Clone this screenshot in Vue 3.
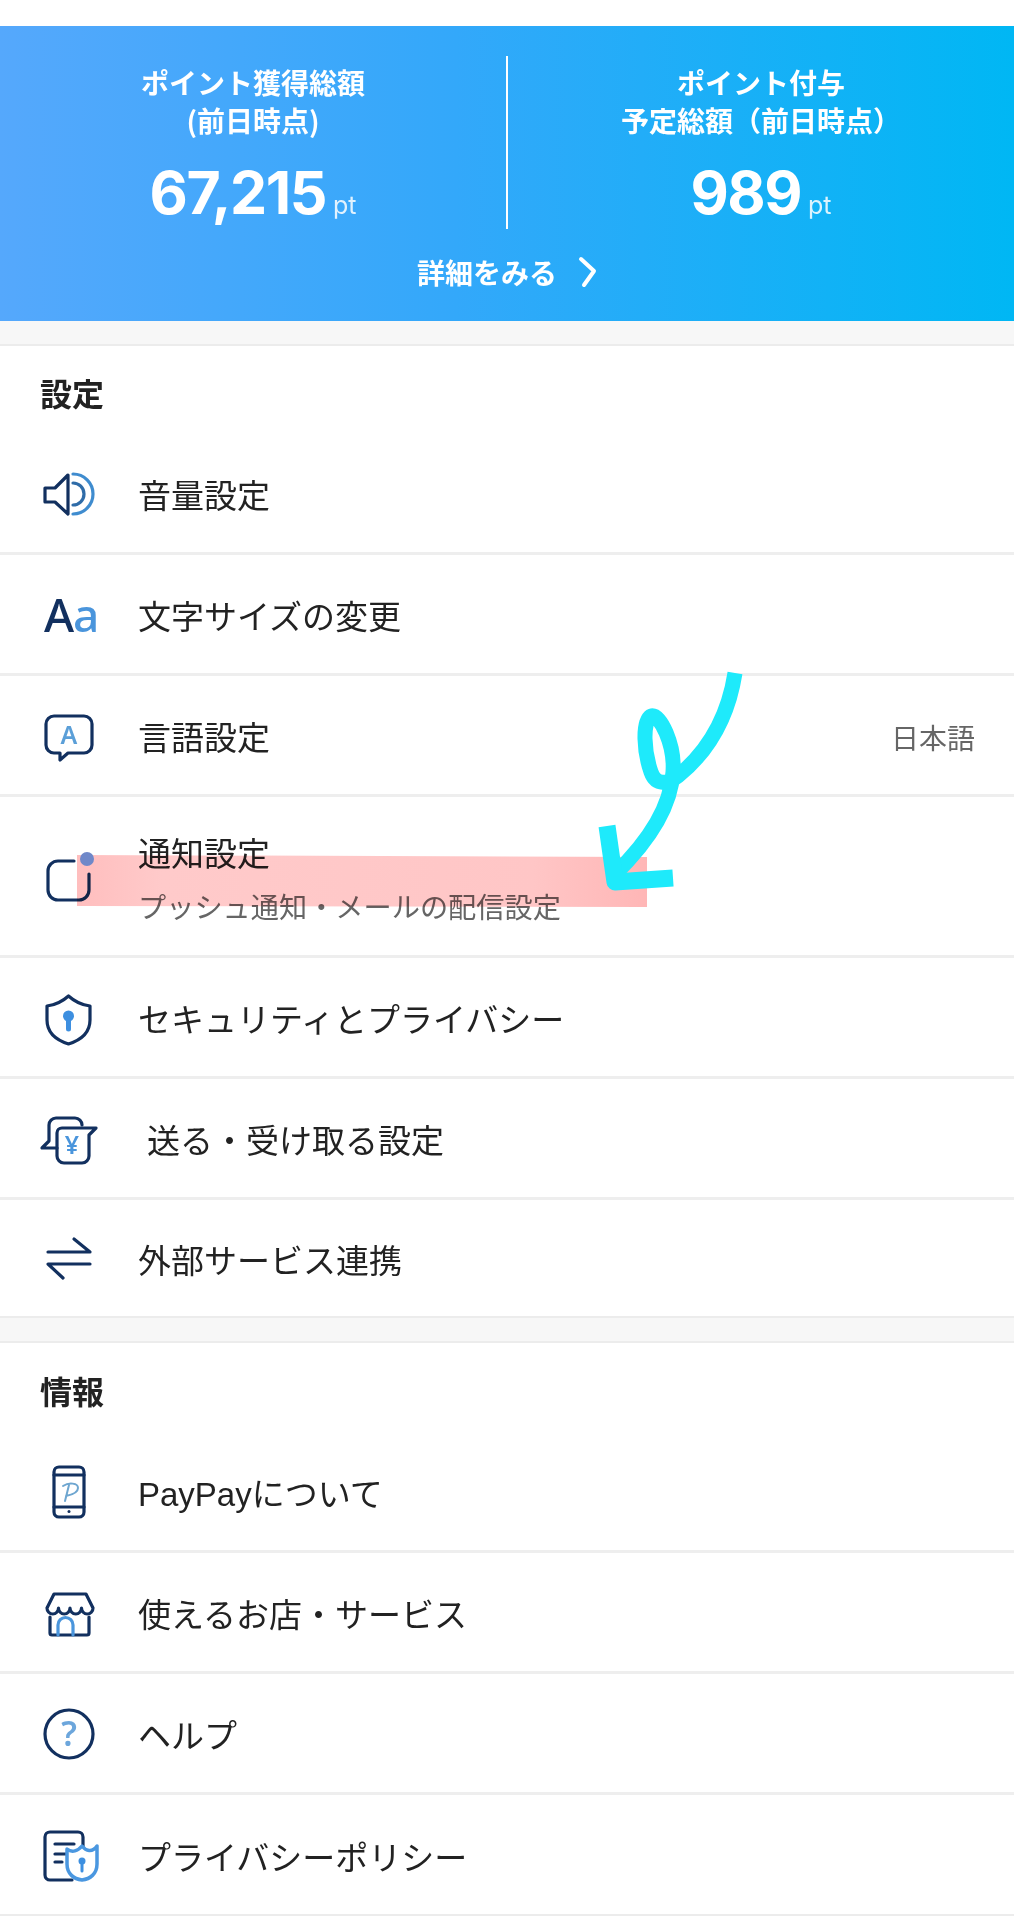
<template>
  <div class="page">
    <div class="hero">
      <div class="totals">
        <div v-for="total in totals" :key="total.value" class="total">
          <div class="total-title">
            <div v-for="line in total.lines" :key="line">{{ line }}</div>
          </div>
          <div class="total-value">{{ total.value }}<span class="unit">pt</span></div>
        </div>
      </div>
      <div class="detail-link">
        <span>詳細をみる</span>
        <svg width="20" height="32" viewBox="0 0 20 32" fill="none" stroke="#fff" stroke-width="4" stroke-linecap="round" stroke-linejoin="round">
          <path d="M4 3 L17 15 L7 29" />
        </svg>
      </div>
    </div>

    <div class="list">
      <section v-for="section in sections" :key="section.title" class="section">
        <h2>{{ section.title }}</h2>
        <div
          v-for="row in section.rows"
          :key="row.label"
          class="row"
          :class="{ tall: row.sub }"
        >
          <svg class="icon" width="64" height="64" viewBox="0 0 64 64" fill="none" stroke="#12305f" stroke-width="3.2" stroke-linecap="round" stroke-linejoin="round">
            <template v-if="row.icon === 'volume'">
              <path d="M9 26 V40 H19 L32 52 V13 L19 26 Z" />
              <path d="M37 21 A11 11 0 0 1 37 43" stroke="#2f6ca8" />
              <path d="M37 12 A20 20 0 0 1 37 52" stroke="#3f8ccf" />
            </template>
            <template v-else-if="row.icon === 'text'">
              <text x="8" y="49" class="glyph medium" font-size="46" fill="#12305f" stroke="none">A</text>
              <text x="37" y="49" class="glyph medium" font-size="46" fill="#4a95dc" stroke="none">a</text>
            </template>
            <template v-else-if="row.icon === 'language'">
              <path d="M18 12 H48 a8 8 0 0 1 8 8 V41 a8 8 0 0 1 -8 8 H32 L24 56 V49 H18 a8 8 0 0 1 -8 -8 V20 a8 8 0 0 1 8 -8 Z" />
              <text x="33" y="40" class="glyph" font-size="25" text-anchor="middle" fill="#5b9fd8" stroke="none">A</text>
            </template>
            <template v-else-if="row.icon === 'bell'">
              <path d="M38 16 H22 a10 10 0 0 0 -10 10 V45 a10 10 0 0 0 10 10 H43 a10 10 0 0 0 10 -10 V29" />
            </template>
            <template v-else-if="row.icon === 'shield'">
              <path d="M32.5 10 C38 15 46 19 54 20 V34 C54 46 45 54 32.5 58 C20 54 11 46 11 34 V20 C19 19 27 15 32.5 10 Z" />
              <circle cx="32.5" cy="30" r="5.5" fill="#3d8fe0" stroke="none" />
              <path d="M32.5 32 V43" stroke="#3d8fe0" stroke-width="5" />
            </template>
            <template v-else-if="row.icon === 'send'">
              <path d="M46 18 a7 7 0 0 0 -7 -7 H20 a7 7 0 0 0 -7 7 V34 L6 41 H21" />
              <path d="M60 21 H26 a5 5 0 0 0 -5 5 V49 a7 7 0 0 0 7 7 H46 a7 7 0 0 0 7 -7 V28 Z" />
              <text x="36" y="47" class="glyph" font-size="25" text-anchor="middle" fill="#4a95dc" stroke="none">¥</text>
            </template>
            <template v-else-if="row.icon === 'exchange'">
              <path d="M12 25 H54 L38 12" />
              <path d="M54 37 H12 L27 51" />
            </template>
            <template v-else-if="row.icon === 'phone'">
              <rect x="18" y="7" width="30" height="50" rx="5" />
              <path d="M18 15 H48 M18 47 H48" />
              <circle cx="33" cy="51.5" r="1.5" fill="#12305f" stroke="none" />
              <path d="M27 26 C33 22 42 23 42 28 C42 33 35 35 30 36 M33 25 L29 41" stroke="#6ea6d0" stroke-width="2" />
            </template>
            <template v-else-if="row.icon === 'shop'">
              <path d="M18 13 H50 L57 27 A5.75 6 0 0 1 45.5 27 A5.75 6 0 0 1 34 27 A5.75 6 0 0 1 22.5 27 A5.75 6 0 0 1 11 27 Z" />
              <path d="M14 36 V52 a2 2 0 0 0 2 2 H51 a2 2 0 0 0 2 -2 V36" />
              <path d="M22 54 V44 a7.5 7.5 0 0 1 15 0 V54" stroke="#4a95dc" />
            </template>
            <template v-else-if="row.icon === 'help'">
              <circle cx="33" cy="32" r="24" />
              <text x="33" y="44" class="glyph" font-size="34" text-anchor="middle" fill="#6ca6dc" stroke="none">?</text>
            </template>
            <template v-else-if="row.icon === 'policy'">
              <path d="M47 24 V13 a5 5 0 0 0 -5 -5 H14 a5 5 0 0 0 -5 5 V51 a5 5 0 0 0 5 5 H36" />
              <path d="M19 20 H38 M19 30 H30 M19 38 H26" />
              <path d="M31 25 C36 29 42 27 46 22 C50 27 56 29 61 22 V40 C61 50 54 55 46 56 C38 55 31 50 31 40 Z" stroke="#4a97e0" stroke-width="3.5" fill="#fff" />
              <circle cx="46" cy="37" r="3.5" fill="#3d8fe0" stroke="none" />
              <path d="M46 38 V47" stroke="#3d8fe0" stroke-width="3" />
            </template>
          </svg>
          <div class="label" :class="{ indent: row.indent }">
            <div>{{ row.label }}</div>
            <div v-if="row.sub" class="sub">{{ row.sub }}</div>
          </div>
          <div v-if="row.value" class="value">{{ row.value }}</div>
        </div>
      </section>
    </div>

    <!-- hand drawn marks lying over the screenshot -->
    <svg class="marks" width="1014" height="1920" viewBox="0 0 1014 1920" fill="none">
      <defs>
        <linearGradient id="pink" x1="0" x2="1" y1="0" y2="0">
          <stop offset="0" stop-color="#ffbebe" />
          <stop offset="0.15" stop-color="#ffcaca" />
          <stop offset="0.8" stop-color="#ffc6c6" />
          <stop offset="1" stop-color="#ffb6b6" />
        </linearGradient>
      </defs>
      <path class="marker" d="M77 855 L647 857 L647 907 L77 906 Z" fill="url(#pink)" />
      <circle cx="87" cy="859" r="7" fill="#6f88c9" />
      <g stroke="#1eeafb" stroke-linecap="butt" stroke-linejoin="round">
        <path stroke-width="15" d="M735 673 C730 705 716 745 678 776 C668 784 656 786 651 772 C644 752 642 722 651 716 C660 713 675 745 673 772 C671 805 650 840 615 874" />
        <path stroke-width="17" d="M607 826 L615 882 L673 878" />
      </g>
    </svg>
  </div>
</template>

<script setup>
const totals = [
  { lines: ['ポイント獲得総額', '(前日時点)'], value: '67,215' },
  { lines: ['ポイント付与', '予定総額（前日時点）'], value: '989' }
]

const sections = [
  {
    title: '設定',
    rows: [
      { icon: 'volume', label: '音量設定' },
      { icon: 'text', label: '文字サイズの変更' },
      { icon: 'language', label: '言語設定', value: '日本語' },
      { icon: 'bell', label: '通知設定', sub: 'プッシュ通知・メールの配信設定' },
      { icon: 'shield', label: 'セキュリティとプライバシー' },
      { icon: 'send', label: '送る・受け取る設定', indent: true },
      { icon: 'exchange', label: '外部サービス連携' }
    ]
  },
  {
    title: '情報',
    rows: [
      { icon: 'phone', label: 'PayPayについて' },
      { icon: 'shop', label: '使えるお店・サービス' },
      { icon: 'help', label: 'ヘルプ' },
      { icon: 'policy', label: 'プライバシーポリシー' }
    ]
  }
]
</script>

<style scoped>
.page {
  position: relative;
  width: 1014px;
  height: 1920px;
  overflow: hidden;
  padding-top: 26px;
  box-sizing: border-box;
  background: #fff;
  font-family: "Noto Sans CJK JP", "Noto Sans", sans-serif;
  color: #222;
}

.hero {
  height: 295px;
  padding-top: 30px;
  box-sizing: border-box;
  background: linear-gradient(90deg, #55a8fc 0%, #33a8fa 45%, #00b7f4 100%);
  color: #fff;
}

.totals {
  display: flex;
  height: 173px;
}

.total {
  flex: 1;
  padding-top: 7px;
  text-align: center;
}

.total + .total {
  border-left: 2px solid #fff;
}

.total-title {
  font-size: 28px;
  font-weight: 700;
  line-height: 38px;
}

.total-value {
  margin-top: 19px;
  font-family: Inter, "Liberation Sans", sans-serif;
  font-size: 59px;
  font-weight: 700;
  line-height: 70px;
  letter-spacing: -1.5px;
}

.unit {
  margin-left: 7px;
  font-size: 25px;
  font-weight: 400;
  letter-spacing: 0;
  opacity: 0.85;
}

.detail-link {
  display: flex;
  justify-content: center;
  align-items: center;
  gap: 20px;
  margin-top: 27px;
  font-size: 28px;
  font-weight: 700;
  line-height: 32px;
}

.list {
  padding-top: 23px;
  background: #f7f7f7;
}

.section {
  border-top: 2px solid #ececec;
  border-bottom: 2px solid #ececec;
  background: #fff;
}

.section + .section {
  margin-top: 23px;
}

.section h2 {
  margin: 0;
  padding: 26px 40px 0;
  height: 88px;
  box-sizing: border-box;
  font-size: 32px;
  font-weight: 700;
  line-height: 40px;
  color: #222;
}

.section + .section h2 {
  padding-top: 27px;
  height: 89px;
}

.row {
  display: flex;
  align-items: center;
  height: 121px;
  box-sizing: border-box;
  padding: 2px 39px 0 36px;
  border-bottom: 3px solid #eeeeee;
  font-family: "Liberation Sans", "Noto Sans CJK JP", sans-serif;
  font-size: 33px;
}

.row.tall {
  height: 161px;
}

.row:last-child {
  height: 119px;
  border-bottom: none;
}

.section:first-of-type .row:last-child {
  height: 116px;
}

.icon {
  flex: none;
  margin-right: 38px;
}

.glyph {
  font-family: "Noto Sans", Roboto, sans-serif;
  font-weight: 600;
}

.glyph.medium {
  font-weight: 500;
}

.label {
  flex: 1;
  padding-top: 6px;
  line-height: 46px;
}

.label.indent {
  padding-left: 9px;
}

.sub {
  margin-top: 10px;
  font-size: 28.2px;
  line-height: 40px;
  color: #666;
}

.value {
  padding-top: 1px;
  font-size: 28px;
  color: #666;
}

.marks {
  position: absolute;
  top: 0;
  left: 0;
  pointer-events: none;
}

.marker {
  mix-blend-mode: multiply;
}
</style>
